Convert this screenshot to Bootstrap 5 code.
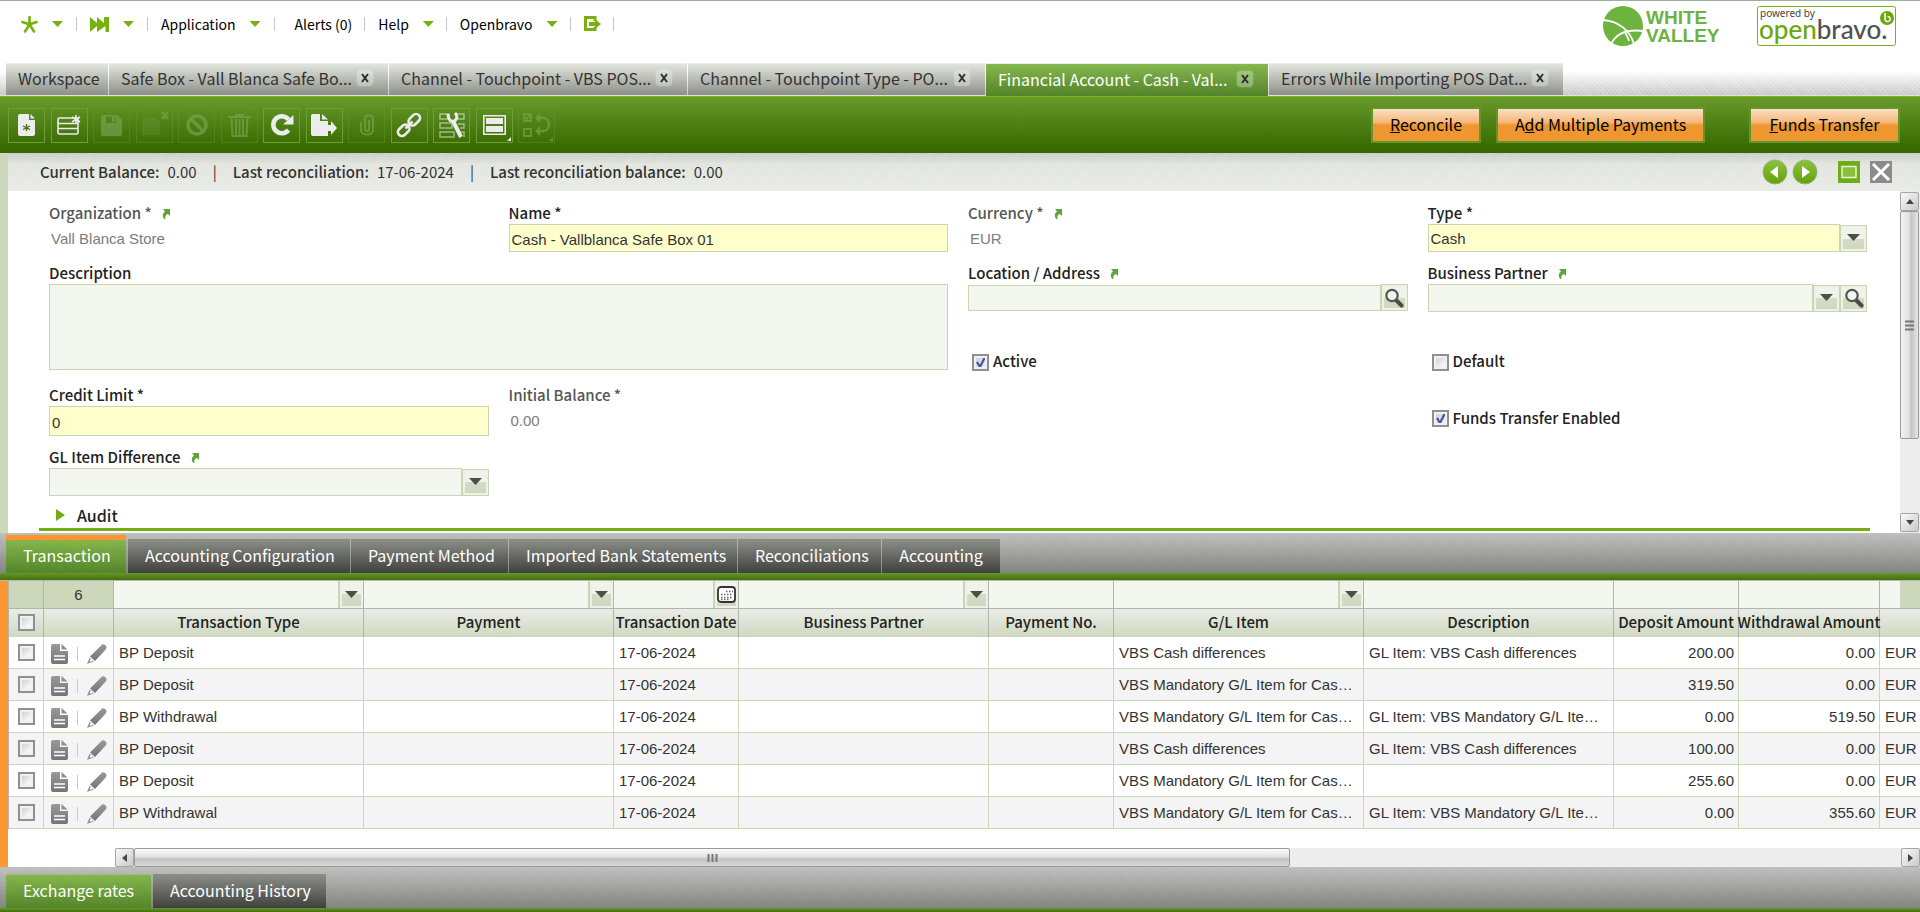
<!DOCTYPE html>
<html lang="en">
<head>
<meta charset="utf-8">
<meta name="viewport" content="width=device-width, initial-scale=1">
<title>Financial Account - Openbravo</title>
<link href="https://cdn.jsdelivr.net/npm/bootstrap@5.3.0/dist/css/bootstrap.min.css" rel="stylesheet">
<style>
:root{--ui:"Noto Sans CJK JP","Noto Sans",sans-serif;--data:"Liberation Sans",Arial,sans-serif;--sage:#cdd7bb;--pale:#f4f7f0;--lime:#78b010}
body{font-family:var(--ui);font-size:14px;line-height:20px;color:#333;background:#fff;border-top:1px solid #9ab09a;overflow-x:hidden}
button{font-family:inherit}
/* top menu */
.topbar{height:62px;padding:0 23px 0 8px}
.menu-item{display:flex;align-items:center;gap:14px;height:14px;margin-top:16px;padding:0 13px;border:0;border-right:1px solid #c4c4c4;background:none;color:#000;font-size:14px;line-height:14px}
.menu-item.tight{padding:0 12px 0 13px}
.menu-item.alerts{padding:0 12px 0 20px}
.caret{width:11px;height:6px;background:var(--lime);clip-path:polygon(0 0,100% 0,50% 100%)}
.logo-b{margin:1px 0 0 32px}
/* window tabs */
.win-tabs{height:33px;gap:1px;padding-left:6px;background:repeating-linear-gradient(45deg,rgba(255,255,255,.25) 0 1px,transparent 1px 3px),linear-gradient(#fff 25%,#c6c7c5);border-bottom:1px solid #dfe3da}
.win-tab{display:flex;align-items:center;justify-content:space-between;height:32px;padding:0 15px 3px 12px;border:0;border-top:1px solid #eceeea;background:linear-gradient(#e2e5de,#8d9088);color:#333;font-size:16px;line-height:24px;white-space:nowrap}
.win-tab.is-on{background:repeating-linear-gradient(45deg,rgba(0,0,0,.04) 0 1px,transparent 1px 3px),linear-gradient(#87ba50,#548529);color:#fff;height:33px;margin-bottom:-1px}
.tab-x{width:16px;height:16px;border-radius:4px;background:rgba(255,255,255,.3);box-shadow:0 0 2px rgba(255,255,255,.3)}
/* toolbar */
.toolbar{height:57px;padding:0 20px 0 8px;background:linear-gradient(#68992c,#376900 92%);border-top:1px solid #79b512}
.tools{width:547px}
.tool{width:37px;height:35px;padding:0;border:1px solid #6c9d38;background:none;color:#ececec;display:grid;place-items:center;position:relative}
.tool:disabled{color:#77a24d;border-color:rgba(108,157,56,.55);opacity:.7}
.tool.has-menu::after{content:"";position:absolute;right:1px;bottom:1px;border:2px solid;border-top-color:transparent;border-left-color:transparent}
.act{height:36px;padding:0 0 2px;border:2px solid #64952a;background:linear-gradient(#fbdfc4,#f5b778 42%,#ee962f 50%);color:#000;font-size:16px;line-height:20px}
.act + .act{margin-left:15px}
.act + .act.apart{margin-left:44px}
/* status line */
.side{width:8px;flex:none;background:var(--sage)}
.status{height:38px;padding:0 28px 0 32px;font-size:15px;background:repeating-linear-gradient(135deg,rgba(255,255,255,.16) 0 1px,transparent 1px 3px),linear-gradient(#c9cbc6,#e2e4de 30%,#e8ebe5)}
.status dt{font-weight:500;margin-right:8px}
.status dd{margin:0;font-weight:400;color:#333}
.status .sep{margin:0 16px}
.round-btn{width:26px;height:26px;padding:0;border:0;background:none;display:grid}
.sq-btn{width:22px;height:22px;padding:0;border:0;display:grid;place-items:center}
/* form */
.form-grid{display:grid;grid-template-columns:repeat(4,minmax(0,1fr));grid-template-rows:60px 60px 62px 62px 55px;column-gap:20px;padding:12px 33px 0 41px}
.lbl{display:block;height:21px;font-size:15px;line-height:20px;font-weight:500;color:#222;white-space:nowrap}
.lbl.dim{color:#555}
.lbl svg{margin:0 0 1px 7px}
.fld{width:100%;height:28px;padding:2px 2px 0;border:1px solid #c9d5b5;border-radius:0;background:var(--pale);font-family:var(--data);font-size:15px;color:#333;outline:0;appearance:none}
.fld.req{background:#ffc}
.ro{padding:5px 2px;font-family:var(--data);font-size:15px;color:#7c7c7c}
.pick{width:27px;height:27px;padding:0;flex:none;border:1px solid #c9d5b5;background:linear-gradient(#f0f3ea 50%,#d5dcc6 50%,#cfd7bf);display:grid;place-items:center;box-shadow:inset 0 0 0 2px #eef2e6}
.box{appearance:none;width:17px;height:17px;margin:0;flex:none;border:2px solid #8f9090;border-radius:0;background:linear-gradient(135deg,#c3c8d0,#f8f8f8 75%);box-shadow:inset 0 0 0 2px #f0f0f0}
.box:checked{background:url("data:image/svg+xml,%3Csvg xmlns='http://www.w3.org/2000/svg' viewBox='0 0 13 13'%3E%3Cpath d='M3 6l3 5 5-10' fill='none' stroke='%23425699' stroke-width='2.2'/%3E%3C/svg%3E"),linear-gradient(135deg,#c8ccd6,#f4f4f8)}
.section-head{height:29px;margin:0 30px 2px 31px;padding:0 17px;border:0;border-bottom:3px solid #74ad15;background:none;color:#222;font-size:16px;font-weight:500}
/* scrollbars */
.sb-v{width:20px;background:#ededed;padding:1px 1px 1px 0}
.sb-h{height:19px;background:#ededed;padding:0;margin-left:107px}
.sb-btn{width:19px;height:19px;flex:none;padding:0;border:1px solid #a5a5a5;border-radius:2px;background:linear-gradient(135deg,#fafafa,#c9c9c9);display:grid;place-items:center}
.thumb{border:1px solid #9a9a9a;border-radius:2px;display:grid;place-items:center}
.sb-v .thumb{flex:227 0 0;background:linear-gradient(90deg,#f2f2f2,#e2e2e2 45%,#c4c4c4 60%,#e5e5e5)}
.sb-v .rest{flex:74 0 0}
.sb-h .thumb{flex:1154 0 0;background:linear-gradient(#fafafa,#e2e2e4 45%,#c2c2c4 60%,#dadadc)}
.sb-h .rest{flex:611 0 0}
/* child tabs */
.child-bar{height:40px;padding:0 0 0 6px;gap:1px;background:repeating-linear-gradient(45deg,rgba(0,0,0,.03) 0 1px,transparent 1px 3px),linear-gradient(#c2c2c0,#858582);align-items:flex-end}
.child-bar.last{height:41px}
.child-line{height:8px;background:linear-gradient(#66982b,#457510 85%);border-bottom:1px solid #b4b8ae}
.child-line.last{height:4px;border:0}
.child-tab{height:34px;padding:0 17px 3px;border:0;border-top:1px solid #8a8a88;background:linear-gradient(#8b8d87,#40413d);color:#fff;font-size:16px;line-height:24px;white-space:nowrap}
.child-tab.is-on{background:repeating-linear-gradient(45deg,rgba(0,0,0,.04) 0 1px,transparent 1px 3px),linear-gradient(#86b94d,#55862a);border-top-color:#9cc27a;margin-right:1px}
.child-tab.is-child{height:38px;border-top:5px solid #fb952f}
/* grid */
.mark-side{width:8px;flex:none;background:#fc9731}
.rows{width:100%;table-layout:fixed;border-collapse:separate;border-spacing:0;font-family:var(--data);font-size:15px;border-left:1px solid #b2b5ae}
.rows th,.rows td{border-right:1px solid #b2b5ae;border-bottom:1px solid #b2b5ae;padding:0;overflow:hidden;white-space:nowrap}
.rows .filters td{height:28px;background:var(--pale)}
.rows .filters td.off{background:var(--sage);text-align:center}
.rows th{height:28px;padding-bottom:2px;background:linear-gradient(#eaede7,#cfd8bf);border-bottom:0;font-family:var(--ui);font-size:15px;line-height:20px;font-weight:500;color:#222;text-align:center;overflow:visible}
.rows th span{display:flex;justify-content:center}
.rows tbody td{height:32px;padding:0 0 0 5px;border-color:var(--sage);line-height:20px;text-overflow:ellipsis}
.rows tbody td.num{text-align:right;padding-right:4px}
.rows tbody tr:nth-child(even) td{background:#f4f4f4}
.rows tbody td:first-child,.rows tbody td:nth-child(2){padding:0}
.rows .flt{width:100%;height:27px;min-width:0;border:0;background:none;outline:0;appearance:none}
.rows .pick{width:25px;height:27px;border-width:0 0 0 2px}
.flt-end{width:20px;height:27px;flex:none;background:var(--sage)}
.row-acts{display:flex;align-items:center;justify-content:space-between;padding:2px 6px 0 7px}
.row-btn{padding:0;border:0;background:none;display:grid}
.tick{width:1px;height:14px;background:#c5d0ae}
</style>
</head>
<body class="d-flex flex-column min-vh-100">
<svg class="position-absolute" width="0" height="0" aria-hidden="true">
 <defs>
  <linearGradient id="gball" x2="0" y2="1"><stop stop-color="#8ac23c"/><stop offset="1" stop-color="#64a30b"/></linearGradient>
  <linearGradient id="gsteel" x2="0" y2="1"><stop stop-color="#999"/><stop offset="1" stop-color="#757575"/></linearGradient>
 </defs>
 <symbol id="x" viewBox="0 0 16 16"><path d="M5 4l6 8M11 4l-6 8" stroke="#2d302d" stroke-width="2"/></symbol>
 <symbol id="down" viewBox="0 0 13 8"><path d="M0 0h13L6.500 7z" fill="#4d4f47"/></symbol>
 <symbol id="jump" viewBox="0 0 8 10"><path d="M1 0h7v7L5.800 5C3.500 6 3 7.500 3.400 10H2C0 7 .5 4.500 3 2.600z" fill="#5ba636"/></symbol>
 <symbol id="lens" viewBox="0 0 20 20"><path d="M11.500 11.500l6 6" stroke="#4b4b46" stroke-width="4" stroke-linecap="round"/><circle cx="8" cy="7.500" r="5.700" fill="#f2f3f3" stroke="#55564f" stroke-width="2.200"/></symbol>
 <symbol id="page" viewBox="0 0 17 20"><path d="M0 2a2 2 0 0 1 2-2h7v7h8v11a2 2 0 0 1-2 2H2a2 2 0 0 1-2-2z" fill="url(#gsteel)"/><path d="M10.500 0L16.500 5.500h-6z" fill="#8f8f8f"/><path d="M3 12h11M3 15.500h11" stroke="#fff" stroke-width="1.300"/></symbol>
 <symbol id="pen" viewBox="0 0 20 20"><path d="M14 1.500a3 3 0 0 1 4.500 4.200L8 17l-5-4.500z" fill="url(#gsteel)"/><path d="M2.500 13.500l4.300 4L0 20z" fill="#999"/><path d="M3.500 14.500l2.500 2.300-3 1z" fill="#fff"/></symbol>
</svg>

<header class="topbar d-flex">
 <nav class="d-flex flex-grow-1" aria-label="Main">
  <button class="menu-item" aria-label="Quick create"><svg width="17" height="17" viewBox="0 0 17 17" stroke="#78b010" stroke-width="2.600" stroke-linecap="round"><path d="M8.500 1v6M8.500 8.500L1.500 6M8.500 8.500l7-2.500M8.500 8.500L4 15.500M8.500 8.500l4.500 7"/></svg><span class="caret"></span></button>
  <button class="menu-item" aria-label="Quick launch"><svg width="19" height="15" viewBox="0 0 19 15" fill="#78b010"><path d="M0 0l7 6V0l7 6V0h5v15h-3.500V9L7 15V9L0 15z"/></svg><span class="caret"></span></button>
  <button class="menu-item">Application<span class="caret"></span></button>
  <button class="menu-item alerts">Alerts (0)</button>
  <button class="menu-item tight">Help<span class="caret"></span></button>
  <button class="menu-item tight">Openbravo<span class="caret"></span></button>
  <button class="menu-item tight" aria-label="Log out"><svg width="17" height="16" viewBox="0 0 17 16"><path d="M11 5V1.500H1.500v12H11V11" fill="none" stroke="#78b010" stroke-width="3"/><path d="M5 6h6V3l6 5-6 5v-3H5z" fill="#78b010"/></svg></button>
 </nav>
 <div class="d-flex pt-1">
  <svg width="122" height="42" viewBox="0 0 122 42" role="img" aria-label="White Valley">
   <ellipse cx="20" cy="21" rx="20" ry="20" fill="#6db33f"/>
   <path d="M0 15c15 1 27 10 31 24M8 39c5-10 16-15 32-13M21 26c2 3 4 6 5 10" fill="none" stroke="#fff" stroke-width="1.800"/>
   <text x="43" y="19" font-family="Liberation Sans" font-weight="700" font-size="19" fill="#6db33f">WHITE</text>
   <text x="43" y="37" font-family="Liberation Sans" font-weight="700" font-size="19" fill="#6db33f">VALLEY</text>
  </svg>
  <svg class="logo-b" width="140" height="41" viewBox="0 0 140 41" role="img" aria-label="Powered by Openbravo">
   <rect x=".5" y=".5" width="138" height="39" rx="2" fill="#fff" stroke="#78b010"/>
   <text x="3" y="11" font-family="Noto Sans" font-size="10" fill="#444">powered by</text>
   <text x="2" y="33" font-family="Lato" font-size="26" font-weight="500" fill="#6aa80a">open<tspan fill="#4e5255">bravo.</tspan></text>
   <circle cx="130" cy="12" r="7" fill="#6aa80a"/>
   <path d="M128 7v6a2.600 2.600 0 1 0 2.500-2.600" fill="none" stroke="#fff" stroke-width="1.500"/>
  </svg>
 </div>
</header>

<div class="win-tabs d-flex" role="tablist">
 <button class="win-tab" style="width:102px" role="tab">Workspace</button>
 <button class="win-tab" style="width:279px" role="tab">Safe Box - Vall Blanca Safe Bo...<svg class="tab-x"><use href="#x"/></svg></button>
 <button class="win-tab" style="width:298px" role="tab">Channel - Touchpoint - VBS POS...<svg class="tab-x"><use href="#x"/></svg></button>
 <button class="win-tab" style="width:297px" role="tab">Channel - Touchpoint Type - PO...<svg class="tab-x"><use href="#x"/></svg></button>
 <button class="win-tab is-on" style="width:282px" role="tab" aria-selected="true">Financial Account - Cash - Val...<svg class="tab-x"><use href="#x"/></svg></button>
 <button class="win-tab" style="width:294px" role="tab">Errors While Importing POS Dat...<svg class="tab-x"><use href="#x"/></svg></button>
</div>

<div class="toolbar d-flex align-items-center justify-content-between">
 <div class="tools d-flex justify-content-between">
  <button class="tool" aria-label="New"><svg width="18" height="22" viewBox="0 0 18 22"><path d="M2 0h9v6h6v14a2 2 0 0 1-2 2H2a2 2 0 0 1-2-2V2a2 2 0 0 1 2-2z" fill="currentColor"/><path d="M12.500 0L17 4.500h-4.500z" fill="currentColor"/><path d="M8.500 10v7M5 12l7 3.500M12 12l-7 3.500" stroke="#41720c" stroke-width="1.300"/></svg></button>
  <button class="tool" aria-label="New in grid"><svg width="24" height="20" viewBox="0 0 24 20" fill="none" stroke="currentColor" stroke-width="1.600"><rect x="1" y="3" width="20" height="16" rx="1.500"/><path d="M1 8.500h20M1 13.500h20"/><path d="M19 0v9M15 2l8 5M23 2l-8 5"/></svg></button>
  <button class="tool" aria-label="Save" disabled><svg width="21" height="21" viewBox="0 0 21 21"><path d="M2 0h14l5 4v15a2 2 0 0 1-2 2H2a2 2 0 0 1-2-2V2a2 2 0 0 1 2-2zM5 1.500V8h10V1.500z" fill="currentColor" fill-rule="evenodd"/><path d="M11 2h3v5h-3z" fill="currentColor"/></svg></button>
  <button class="tool" aria-label="Save and close" disabled><svg width="30" height="28" viewBox="0 0 30 28"><path d="M3 7h14l4 4v13H3z" fill="currentColor" opacity=".35"/><path d="M23 1l6 7M29 1l-6 7" stroke="currentColor" stroke-width="2.500"/></svg></button>
  <button class="tool" aria-label="Undo" disabled><svg width="22" height="22" viewBox="0 0 22 22" fill="none" stroke="currentColor" stroke-width="3.500"><circle cx="11" cy="11" r="9"/><path d="M5 5l12 12"/></svg></button>
  <button class="tool" aria-label="Delete" disabled><svg width="23" height="23" viewBox="0 0 23 23" fill="none" stroke="currentColor" stroke-width="2"><path d="M0 3h23M8 3V1h7v2M3.500 4l1 18h14l1-18M8 5v16M11.500 5v16M15 5v16"/></svg></button>
  <button class="tool" aria-label="Refresh"><svg width="24" height="22" viewBox="0 0 24 22"><path d="M18.500 5.500A8.500 8.500 0 1 0 18.500 16" fill="none" stroke="currentColor" stroke-width="4.500"/><path d="M23.500 1v9.500H13z" fill="currentColor"/></svg></button>
  <button class="tool" aria-label="Export"><svg width="26" height="22" viewBox="0 0 26 22" fill="currentColor"><path d="M2 0h7v7h8v4h3V7l6 7-6 7v-4h-3v5H2a2 2 0 0 1-2-2V2a2 2 0 0 1 2-2z"/><path d="M11 0l6 5.500h-6z"/></svg></button>
  <button class="tool" aria-label="Attachments" disabled><svg width="16" height="22" viewBox="0 0 16 22" fill="none" stroke="currentColor" stroke-width="2"><path d="M2 8v8c0 6 12 6 12 0V5c0-5-8-5-8 0v10c0 3 4 3 4 0V6"/></svg></button>
  <button class="tool" aria-label="Copy link"><svg width="26" height="26" viewBox="0 0 26 26" fill="none" stroke="currentColor" stroke-width="2.600"><g transform="rotate(-45 13 13)"><rect x="-1" y="9" width="13" height="8" rx="4"/><rect x="14" y="9" width="13" height="8" rx="4"/><path d="M8 13h10"/></g></svg></button>
  <button class="tool" aria-label="Process"><svg width="26" height="27" viewBox="0 0 26 27" fill="none" stroke="currentColor"><path d="M1 2h9v5H1zM17 2h8v5h-6M1 11h12v5H1zM19 12h6v4h-4M1 20h14v5H1zM21 20h4v5" stroke-width="1.500" opacity=".55"/><path d="M14 9l8 16" stroke-width="4"/><path d="M9 2c0 6 3 8 6 7s4-5 1-8" stroke-width="3"/></svg></button>
  <button class="tool has-menu" aria-label="Layout"><svg width="23" height="20" viewBox="0 0 23 20"><path d="M.8.800h21.400v18.400H.800z" fill="none" stroke="currentColor" stroke-width="1.600"/><path d="M3 3h17v6H3zM3 11h17v6H3z" fill="currentColor"/></svg></button>
  <button class="tool has-menu" aria-label="Selection" disabled><svg width="28" height="24" viewBox="0 0 28 24" fill="none" stroke="currentColor" stroke-width="1.800"><path d="M1 1h7v7H1zM1 16h7v7H1zM2 4l2 2 4-5"/><path d="M15 5h5c8 0 8 13 0 13h-5" stroke-width="2.500"/><path d="M17 0v10l-5-5zM17 13v10l-5-5z" fill="currentColor" stroke="none"/></svg></button>
 </div>
 <div class="d-flex">
  <button class="act" style="width:110px"><u>R</u>econcile</button>
  <button class="act" style="width:209px">A<u>d</u>d Multiple Payments</button>
  <button class="act apart" style="width:151px"><u>F</u>unds Transfer</button>
 </div>
</div>

<main class="d-flex">
 <div class="side"></div>
 <div class="flex-grow-1">
  <div class="status d-flex align-items-center justify-content-between">
   <dl class="d-flex mb-0">
    <dt>Current Balance:</dt><dd>0.00</dd><dd class="sep">|</dd>
    <dt>Last reconciliation:</dt><dd>17-06-2024</dd><dd class="sep">|</dd>
    <dt>Last reconciliation balance:</dt><dd>0.00</dd>
   </dl>
   <div class="d-flex align-items-center">
    <button class="round-btn" aria-label="Previous record"><svg viewBox="0 0 26 26"><circle cx="13" cy="13" r="12" fill="url(#gball)" stroke="#9aae84"/><path d="M16 7v12l-8-6z" fill="#fff"/></svg></button>
    <button class="round-btn ms-1 me-3" aria-label="Next record"><svg viewBox="0 0 26 26"><circle cx="13" cy="13" r="12" fill="url(#gball)" stroke="#9aae84"/><path d="M10 7v12l8-6z" fill="#fff"/></svg></button>
    <button class="sq-btn ms-1" style="background:#6fad15" aria-label="Maximize"><svg width="22" height="22"><rect x="4" y="5.500" width="14" height="11" fill="#8abf3e" stroke="#e8f3d8" stroke-width="1.500"/></svg></button>
    <button class="sq-btn" style="margin-left:10px;background:#8b8b8b" aria-label="Close"><svg width="22" height="22"><path d="M3 3l16 16M19 3L3 19" stroke="#fff" stroke-width="3"/></svg></button>
   </div>
  </div>
  <div class="d-flex">
   <div class="flex-grow-1">
    <form class="form-grid">
     <div><span class="lbl dim">Organization * <svg width="8" height="10"><use href="#jump"/></svg></span><div class="ro">Vall Blanca Store</div></div>
     <div><label class="lbl" for="f-name">Name *</label><input class="fld req" id="f-name" value="Cash - Vallblanca Safe Box 01"></div>
     <div><span class="lbl dim">Currency * <svg width="8" height="10"><use href="#jump"/></svg></span><div class="ro">EUR</div></div>
     <div><label class="lbl" for="f-type">Type *</label><div class="d-flex align-items-center"><select class="fld req" id="f-type"><option>Cash</option></select><button type="button" class="pick" aria-label="Open type list"><svg width="13" height="8"><use href="#down"/></svg></button></div></div>
     <div style="grid-column:span 2;grid-row:span 2"><label class="lbl" for="f-desc">Description</label><textarea class="fld d-block" id="f-desc" style="height:86px;resize:none"></textarea></div>
     <div><label class="lbl" for="f-loc">Location / Address <svg width="8" height="10"><use href="#jump"/></svg></label><div class="d-flex align-items-center"><input class="fld" id="f-loc" style="height:26px"><button type="button" class="pick" aria-label="Search location"><svg width="20" height="20"><use href="#lens"/></svg></button></div></div>
     <div><label class="lbl" for="f-bp">Business Partner <svg width="8" height="10"><use href="#jump"/></svg></label><div class="d-flex align-items-center"><select class="fld" id="f-bp"><option></option></select><button type="button" class="pick" aria-label="Open partner list"><svg width="13" height="8"><use href="#down"/></svg></button><button type="button" class="pick" aria-label="Search partner"><svg width="20" height="20"><use href="#lens"/></svg></button></div></div>
     <div class="d-flex align-items-end gap-1 ps-1" style="padding-bottom:14px"><input type="checkbox" class="box" id="f-act" checked><label class="lbl h-auto" for="f-act">Active</label></div>
     <div class="d-flex align-items-end gap-1 ps-1" style="padding-bottom:14px"><input type="checkbox" class="box" id="f-def"><label class="lbl h-auto" for="f-def">Default</label></div>
     <div><label class="lbl" for="f-cred">Credit Limit *</label><input class="fld req" id="f-cred" value="0" style="height:30px"></div>
     <div><span class="lbl dim">Initial Balance *</span><div class="ro">0.00</div></div>
     <div></div>
     <div class="d-flex align-items-center gap-1 ps-1 pt-1"><input type="checkbox" class="box" id="f-fund" checked><label class="lbl h-auto" for="f-fund">Funds Transfer Enabled</label></div>
     <div><label class="lbl" for="f-gl">GL Item Difference <svg width="8" height="10"><use href="#jump"/></svg></label><div class="d-flex align-items-center"><select class="fld" id="f-gl"><option></option></select><button type="button" class="pick" aria-label="Open GL item list"><svg width="13" height="8"><use href="#down"/></svg></button></div></div>
    </form>
    <div class="d-flex"><button class="section-head d-flex align-items-center flex-grow-1"><svg width="9" height="12" class="me-2"><path d="M0 0l9 6-9 6z" fill="#6fac14"/></svg><span class="ps-1">Audit</span></button></div>
   </div>
   <div class="sb-v d-flex flex-column">
    <button class="sb-btn" aria-label="Scroll up"><svg width="8" height="5"><path d="M0 5h8L4 0z" fill="#444"/></svg></button>
    <div class="thumb"><svg width="9" height="11"><path d="M0 1.500h9M0 5.500h9M0 9.500h9" stroke="#777" stroke-width="2"/></svg></div>
    <div class="rest"></div>
    <button class="sb-btn" aria-label="Scroll down"><svg width="8" height="5"><path d="M0 0h8L4 5z" fill="#444"/></svg></button>
   </div>
  </div>
 </div>
</main>

<div class="child-bar d-flex" role="tablist">
 <button class="child-tab is-on is-child" style="width:120px" role="tab" aria-selected="true">Transaction</button>
 <button class="child-tab" style="width:222px" role="tab">Accounting Configuration</button>
 <button class="child-tab" style="width:157px" role="tab">Payment Method</button>
 <button class="child-tab" style="width:228px" role="tab">Imported Bank Statements</button>
 <button class="child-tab" style="width:143px" role="tab">Reconciliations</button>
 <button class="child-tab" style="width:118px" role="tab">Accounting</button>
</div>
<div class="child-line"></div>

<section class="d-flex flex-grow-1">
 <div class="mark-side"></div>
 <div class="flex-grow-1 d-flex flex-column overflow-hidden">
  <table class="rows">
   <colgroup><col style="width:35px"><col style="width:70px"><col style="width:250px"><col style="width:250px"><col style="width:125px"><col style="width:250px"><col style="width:125px"><col style="width:250px"><col style="width:250px"><col style="width:125px"><col style="width:141px"><col></colgroup>
   <thead>
    <tr class="filters">
     <td class="off"></td><td class="off">6</td>
     <td><div class="d-flex"><select class="flt" aria-label="Filter transaction type"><option></option></select><button class="pick" aria-label="Open list"><svg width="13" height="8"><use href="#down"/></svg></button></div></td>
     <td><div class="d-flex"><select class="flt" aria-label="Filter payment"><option></option></select><button class="pick" aria-label="Open list"><svg width="13" height="8"><use href="#down"/></svg></button></div></td>
     <td><div class="d-flex"><input class="flt" aria-label="Filter date"><button class="pick" aria-label="Pick date"><svg width="19" height="17" viewBox="0 0 19 17"><rect x="1" y="1" width="17" height="15" rx="3" fill="#fff" stroke="#333" stroke-width="1.800"/><path d="M9 5.500h7M4 8.500h12M4 11.500h12M4 13.500h8" stroke="#666" stroke-width="1.500" stroke-dasharray="1.500 1.500"/></svg></button></div></td>
     <td><div class="d-flex"><select class="flt" aria-label="Filter partner"><option></option></select><button class="pick" aria-label="Open list"><svg width="13" height="8"><use href="#down"/></svg></button></div></td>
     <td><input class="flt d-block" aria-label="Filter payment number"></td>
     <td><div class="d-flex"><select class="flt" aria-label="Filter G/L item"><option></option></select><button class="pick" aria-label="Open list"><svg width="13" height="8"><use href="#down"/></svg></button></div></td>
     <td><input class="flt d-block" aria-label="Filter description"></td>
     <td><input class="flt d-block" aria-label="Filter deposit"></td>
     <td><input class="flt d-block" aria-label="Filter withdrawal"></td>
     <td class="border-end-0"><div class="d-flex"><input class="flt" aria-label="Filter currency"><span class="flt-end"></span></div></td>
    </tr>
    <tr>
     <th><span><input type="checkbox" class="box" aria-label="Select all"></span></th><th></th>
     <th>Transaction Type</th><th>Payment</th><th><span>Transaction Date</span></th><th>Business Partner</th><th>Payment No.</th><th>G/L Item</th><th>Description</th><th><span>Deposit Amount</span></th><th><span>Withdrawal Amount</span></th><th class="border-end-0"></th>
    </tr>
   </thead>
   <tbody>
    <tr><td><div class="d-flex justify-content-center"><input type="checkbox" class="box" aria-label="Select row 1"></div></td><td><div class="row-acts"><button class="row-btn" aria-label="Open in form"><svg width="17" height="20"><use href="#page"/></svg></button><span class="tick"></span><button class="row-btn" aria-label="Edit"><svg width="20" height="20"><use href="#pen"/></svg></button></div></td><td>BP Deposit</td><td></td><td>17-06-2024</td><td></td><td></td><td>VBS Cash differences</td><td>GL Item: VBS Cash differences</td><td class="num">200.00</td><td class="num">0.00</td><td class="border-end-0">EUR</td></tr>
    <tr><td><div class="d-flex justify-content-center"><input type="checkbox" class="box" aria-label="Select row 2"></div></td><td><div class="row-acts"><button class="row-btn" aria-label="Open in form"><svg width="17" height="20"><use href="#page"/></svg></button><span class="tick"></span><button class="row-btn" aria-label="Edit"><svg width="20" height="20"><use href="#pen"/></svg></button></div></td><td>BP Deposit</td><td></td><td>17-06-2024</td><td></td><td></td><td>VBS Mandatory G/L Item for Cas…</td><td></td><td class="num">319.50</td><td class="num">0.00</td><td class="border-end-0">EUR</td></tr>
    <tr><td><div class="d-flex justify-content-center"><input type="checkbox" class="box" aria-label="Select row 3"></div></td><td><div class="row-acts"><button class="row-btn" aria-label="Open in form"><svg width="17" height="20"><use href="#page"/></svg></button><span class="tick"></span><button class="row-btn" aria-label="Edit"><svg width="20" height="20"><use href="#pen"/></svg></button></div></td><td>BP Withdrawal</td><td></td><td>17-06-2024</td><td></td><td></td><td>VBS Mandatory G/L Item for Cas…</td><td>GL Item: VBS Mandatory G/L Ite…</td><td class="num">0.00</td><td class="num">519.50</td><td class="border-end-0">EUR</td></tr>
    <tr><td><div class="d-flex justify-content-center"><input type="checkbox" class="box" aria-label="Select row 4"></div></td><td><div class="row-acts"><button class="row-btn" aria-label="Open in form"><svg width="17" height="20"><use href="#page"/></svg></button><span class="tick"></span><button class="row-btn" aria-label="Edit"><svg width="20" height="20"><use href="#pen"/></svg></button></div></td><td>BP Deposit</td><td></td><td>17-06-2024</td><td></td><td></td><td>VBS Cash differences</td><td>GL Item: VBS Cash differences</td><td class="num">100.00</td><td class="num">0.00</td><td class="border-end-0">EUR</td></tr>
    <tr><td><div class="d-flex justify-content-center"><input type="checkbox" class="box" aria-label="Select row 5"></div></td><td><div class="row-acts"><button class="row-btn" aria-label="Open in form"><svg width="17" height="20"><use href="#page"/></svg></button><span class="tick"></span><button class="row-btn" aria-label="Edit"><svg width="20" height="20"><use href="#pen"/></svg></button></div></td><td>BP Deposit</td><td></td><td>17-06-2024</td><td></td><td></td><td>VBS Mandatory G/L Item for Cas…</td><td></td><td class="num">255.60</td><td class="num">0.00</td><td class="border-end-0">EUR</td></tr>
    <tr><td><div class="d-flex justify-content-center"><input type="checkbox" class="box" aria-label="Select row 6"></div></td><td><div class="row-acts"><button class="row-btn" aria-label="Open in form"><svg width="17" height="20"><use href="#page"/></svg></button><span class="tick"></span><button class="row-btn" aria-label="Edit"><svg width="20" height="20"><use href="#pen"/></svg></button></div></td><td>BP Withdrawal</td><td></td><td>17-06-2024</td><td></td><td></td><td>VBS Mandatory G/L Item for Cas…</td><td>GL Item: VBS Mandatory G/L Ite…</td><td class="num">0.00</td><td class="num">355.60</td><td class="border-end-0">EUR</td></tr>
   </tbody>
  </table>
  <div class="sb-h d-flex mt-auto">
   <button class="sb-btn" aria-label="Scroll left"><svg width="5" height="8"><path d="M5 0v8L0 4z" fill="#444"/></svg></button>
   <div class="thumb"><svg width="11" height="8"><path d="M1.500 0v8M5.500 0v8M9.500 0v8" stroke="#777" stroke-width="2"/></svg></div>
   <div class="rest"></div>
   <button class="sb-btn" aria-label="Scroll right"><svg width="5" height="8"><path d="M0 0v8l5-4z" fill="#444"/></svg></button>
  </div>
 </div>
</section>

<div class="child-bar last d-flex" role="tablist">
 <button class="child-tab is-on" style="width:145px" role="tab">Exchange rates</button>
 <button class="child-tab" style="width:173px" role="tab">Accounting History</button>
</div>
<div class="child-line last"></div>
<script src="https://cdn.jsdelivr.net/npm/bootstrap@5.3.0/dist/js/bootstrap.bundle.min.js"></script>
</body>
</html>
